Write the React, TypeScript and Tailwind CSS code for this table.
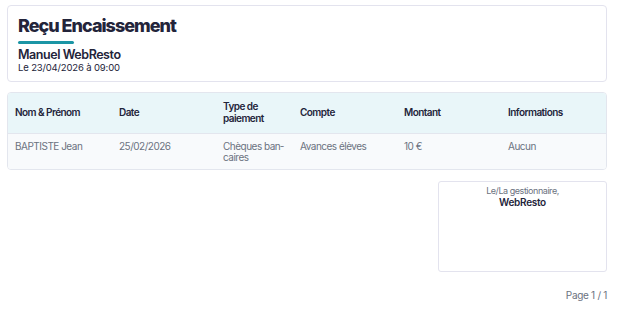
import React from 'react';

const columns = [
  { label: 'Nom & Prénom', width: 'w-[104px]' },
  { label: 'Date', width: 'w-[104px]' },
  { label: 'Type de paiement', width: 'w-[77px]' },
  { label: 'Compte', width: 'w-[104px]' },
  { label: 'Montant', width: 'w-[104px]' },
  { label: 'Informations', width: 'w-[106px]' },
];

const rows = [
  {
    name: 'BAPTISTE Jean',
    date: '25/02/2026',
    type: 'Chèques ban\u00ADcaires',
    account: 'Avances élèves',
    amount: '10 €',
    info: 'Aucun',
  },
];

export default function App() {
  return (
    <div
      lang="fr"
      className="w-[617px] h-[312px] bg-white pl-[7px] pt-[5px] text-[#23243a]"
      style={{ fontFamily: 'Inter, "Noto Sans", sans-serif' }}
    >
      <div className="w-[600px] flex flex-col">
        {/* Receipt header */}
        <div className="h-[77px] border border-[#e3e3ee] rounded-[4px] px-[10px] pt-[8px]">
          <h1 className="text-[18px] leading-[23px] font-extrabold tracking-[-1px]">Reçu Encaissement</h1>
          <div className="mt-[4px] w-[56px] h-[3px] bg-[#1b95a5] rounded-full" />
          <div className="mt-[3px] text-[12.5px] leading-[15px] font-semibold tracking-[-0.45px]">Manuel WebResto</div>
          <div className="text-[9.5px] leading-[11px] tracking-[-0.15px]">Le 23/04/2026 à 09:00</div>
        </div>

        {/* Payments table */}
        <div className="mt-[10px] border border-[#e3e6ee] rounded-[4px] overflow-hidden">
          <table className="w-full table-fixed border-collapse">
            <thead>
              <tr className="bg-[#e9f6f9] h-[40px] border-b border-[#e3e6ee]">
                {columns.map((col) => (
                  <th
                    key={col.label}
                    className={`${col.width} px-[7px] text-left align-middle text-[10px] leading-[11.5px] font-semibold tracking-[-0.55px] text-[#23243a]`}
                  >
                    {col.label}
                  </th>
                ))}
              </tr>
            </thead>
            <tbody>
              {rows.map((row) => (
                <tr key={row.name} className="bg-[#f8fafc] h-[36px] align-top text-[10px] leading-[11.5px] tracking-[-0.5px] text-[#6b7280]">
                  <td className="px-[7px] pt-[7px]">{row.name}</td>
                  <td className="px-[7px] pt-[7px]">{row.date}</td>
                  <td className="px-[7px] pt-[7px] pb-[5px]">{row.type}</td>
                  <td className="px-[7px] pt-[7px]">{row.account}</td>
                  <td className="px-[7px] pt-[7px]">{row.amount}</td>
                  <td className="px-[7px] pt-[7px]">{row.info}</td>
                </tr>
              ))}
            </tbody>
          </table>
        </div>

        {/* Signature */}
        <div className="mt-[11px] self-end w-[169px] h-[91px] border border-[#e3e3ee] rounded-[3px] pt-[3px] text-center">
          <div className="text-[9px] leading-[11px] tracking-[-0.45px] text-[#6b7280]">Le/La gestionnaire,</div>
          <div className="text-[10px] leading-[12px] font-semibold tracking-[-0.3px]">WebResto</div>
        </div>

        <div className="mt-[17px] text-right text-[10px] leading-[12px] tracking-[-0.3px] text-[#6b7280]">Page 1 / 1</div>
      </div>
    </div>
  );
}
